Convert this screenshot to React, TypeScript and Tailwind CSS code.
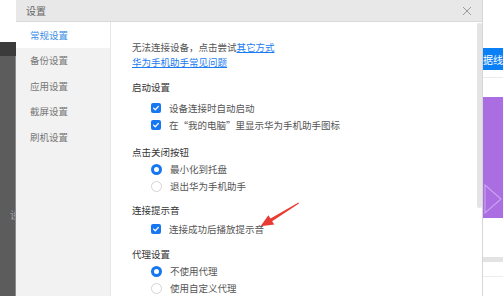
import React from "react";

const font = { fontFamily: '"Noto Sans CJK SC", "Noto Sans", sans-serif' };

function Check() {
  return (
    <span className="flex h-[10px] w-[10px] items-center justify-center rounded-[2px] bg-[#1677f0]">
      <svg width="8" height="8" viewBox="0 0 8 8">
        <path d="M1.6 4.1 L3.3 5.7 L6.4 2.4" stroke="#fff" strokeWidth="1.3" fill="none" strokeLinecap="round" strokeLinejoin="round" />
      </svg>
    </span>
  );
}

function Radio({ on }: { on: boolean }) {
  return on ? (
    <span className="box-border h-[11px] w-[11px] rounded-full border-[3px] border-[#1677f0] bg-white" />
  ) : (
    <span className="box-border h-[11px] w-[11px] rounded-full border border-[#d4d4d4] bg-white" />
  );
}

function Row({ mt, children }: { mt: string; children: React.ReactNode }) {
  return <div className={`flex h-[16px] items-center gap-[8px] pl-[19px] ${mt}`}>{children}</div>;
}

export default function App() {
  const side = ["常规设置", "备份设置", "应用设置", "截屏设置", "刷机设置"];
  return (
    <div className="relative flex h-[296px] w-[503px] overflow-hidden bg-white" style={font}>
      {/* left strip */}
      <div className="flex w-[16px] flex-col">
        <div className="h-[42px] bg-white" />
        <div className="h-[14px] bg-[#3b3b3b]" />
        <div className="flex flex-1 flex-col border-r border-[#8a8a8a] bg-[#5c5c5c]">
          <div className="mt-[152px] h-[14px] overflow-hidden pl-[10px] text-[10px] leading-[14px] text-[#a8a8a8]">
            设
          </div>
        </div>
      </div>

      {/* dialog */}
      <div className="flex w-[469px] flex-col border-r border-[#d6d6d6]">
        <div className="flex h-[24px] items-center justify-between border-b border-[#d9d9d9] bg-[#e8e8e8] pl-[10px] pr-[10px]">
          <span className="text-[10px] text-[#666]">设置</span>
          <svg width="10" height="10" viewBox="0 0 10 10">
            <path d="M1 1 L9 9 M9 1 L1 9" stroke="#9a9a9a" strokeWidth="1" />
          </svg>
        </div>
        <div className="flex flex-1">
          {/* sidebar */}
          <div className="flex w-[95px] flex-col border-r border-[#e6e6e6] bg-[#f2f2f2]">
            {side.map((s, i) => (
              <div
                key={s}
                className={`flex h-[25.5px] items-center pl-[14px] text-[9.5px] ${
                  i === 0 ? "bg-white text-[#3a8ee6]" : "text-[#777]"
                }`}
              >
                {s}
              </div>
            ))}
          </div>
          {/* content */}
          <div className="flex flex-1">
            <div className="flex flex-1 flex-col pl-[21px] pt-[18px] text-[9.5px] text-[#555]">
              <div className="h-[15px] leading-[15px]">
                无法连接设备，点击尝试<span className="text-[#1a7cf0] underline">其它方式</span>
              </div>
              <div className="h-[15px] leading-[15px] text-[#1a7cf0] underline">华为手机助手常见问题</div>

              <div className="mt-[10px] h-[15px] leading-[15px] text-[#333]">启动设置</div>
              <Row mt="mt-[5px]">
                <Check />
                <span>设备连接时自动启动</span>
              </Row>
              <Row mt="mt-[1px]">
                <Check />
                <span>
                  在<span className="inline-block w-[9.5px] text-right">“</span>我的电脑
                  <span className="inline-block w-[9.5px] text-left">”</span>里显示华为手机助手图标
                </span>
              </Row>

              <div className="mt-[12px] h-[15px] leading-[15px] text-[#333]">点击关闭按钮</div>
              <Row mt="mt-[1px]">
                <Radio on />
                <span>最小化到托盘</span>
              </Row>
              <Row mt="mt-[1px]">
                <Radio on={false} />
                <span>退出华为手机助手</span>
              </Row>

              <div className="mt-[9px] h-[15px] leading-[15px] text-[#333]">连接提示音</div>
              <Row mt="mt-[3px]">
                <Check />
                <span>连接成功后播放提示音</span>
              </Row>

              <div className="mt-[10px] h-[15px] leading-[15px] text-[#333]">代理设置</div>
              <Row mt="mt-[1px]">
                <Radio on />
                <span>不使用代理</span>
              </Row>
              <Row mt="mt-[1px]">
                <Radio on={false} />
                <span>使用自定义代理</span>
              </Row>
            </div>
            <div className="flex w-[5px] flex-col pt-[1px]">
              <div className="h-[185px] rounded-[2px] bg-[#e4e4e4]" />
            </div>
          </div>
        </div>
      </div>

      {/* right strip */}
      <div className="flex flex-1 flex-col bg-white">
        <div className="mt-[48px] flex h-[22px] items-center overflow-hidden whitespace-nowrap bg-[#0b7ff5] text-[10px] text-white">
          <span className="-ml-[10px]">数据线</span>
        </div>
        <div className="mt-[7px] h-px bg-[#ececec]" />
        <div className="relative mt-[19px] h-[121px] bg-[#aa6de2]">
          <svg className="absolute left-[1px] top-[86px]" width="18" height="32" viewBox="0 0 18 32">
            <path d="M1 2 L17 16 L1 30 Z" stroke="#c9a2ef" strokeWidth="1.2" fill="none" />
          </svg>
        </div>
        <div className="mt-[39px] h-[5px] bg-[#e3e3e3]" />
        <div className="mt-[14px] h-px bg-[#ececec]" />
      </div>

      {/* annotation arrow */}
      <svg className="pointer-events-none absolute left-0 top-0" width="503" height="296">
        <polygon
          points="298.5,202.5 270.5,218.6 268.4,215.2 260.5,226.3 274.3,224.6 272.1,221.3 299,203.6"
          fill="#ea3a34"
        />
      </svg>
    </div>
  );
}
